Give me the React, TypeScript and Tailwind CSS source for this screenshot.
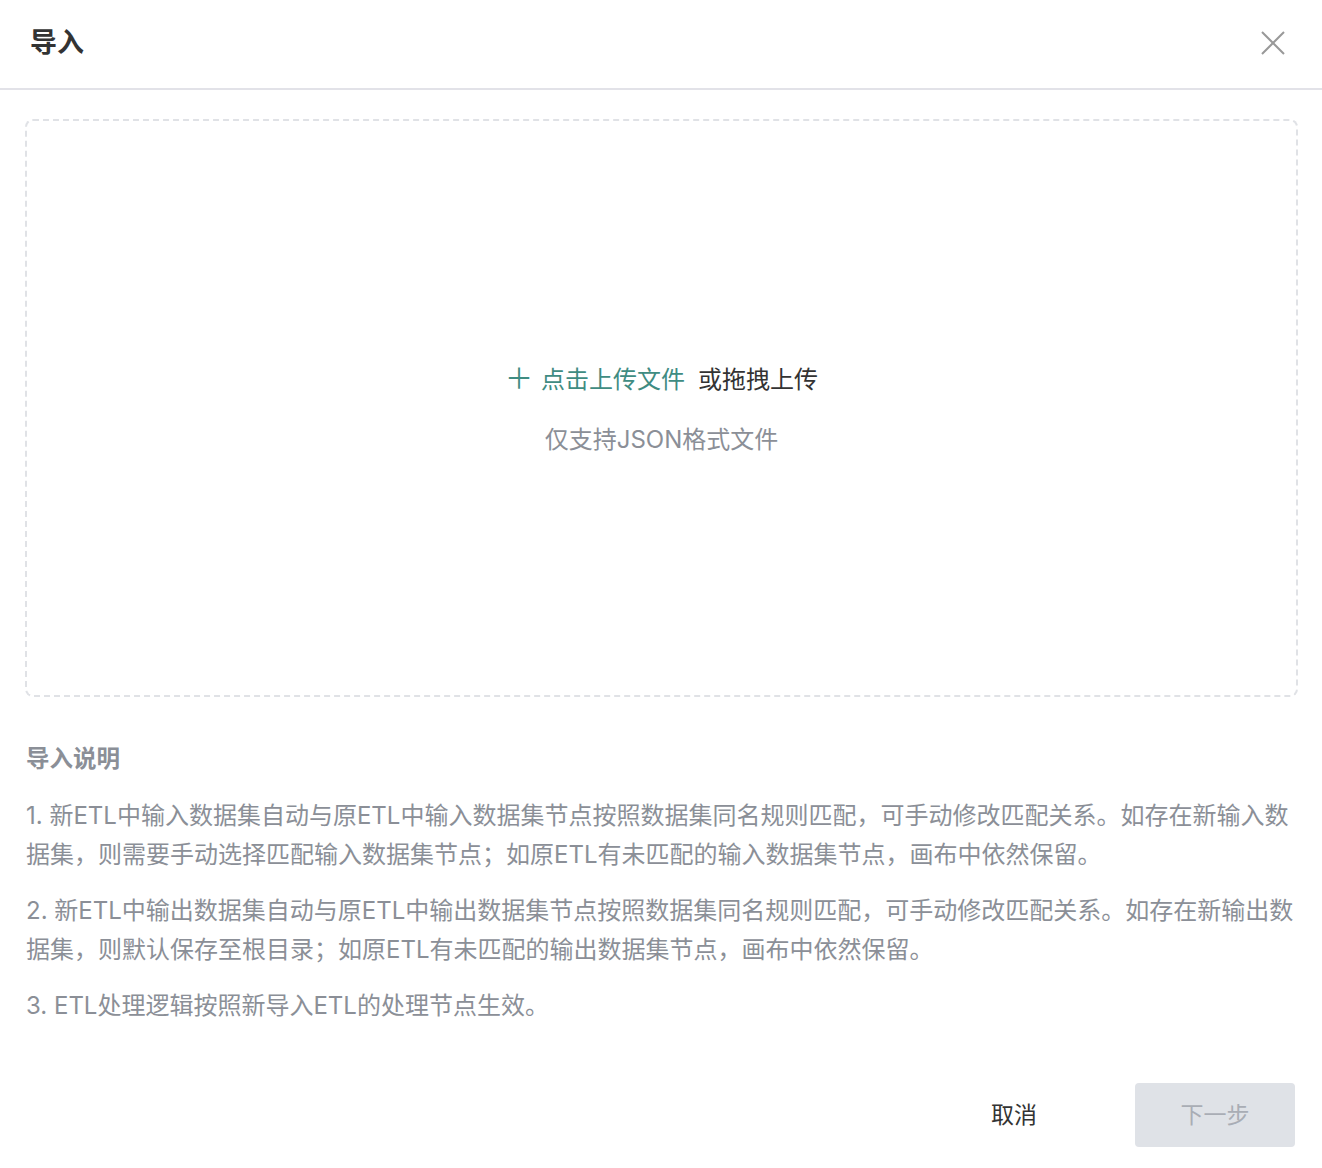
import React from "react";

const notes = [
    "1. 新ETL中输入数据集自动与原ETL中输入数据集节点按照数据集同名规则匹配，可手动修改匹配关系。如存在新输入数据集，则需要手动选择匹配输入数据集节点；如原ETL有未匹配的输入数据集节点，画布中依然保留。",
    "2. 新ETL中输出数据集自动与原ETL中输出数据集节点按照数据集同名规则匹配，可手动修改匹配关系。如存在新输出数据集，则默认保存至根目录；如原ETL有未匹配的输出数据集节点，画布中依然保留。",
    "3. ETL处理逻辑按照新导入ETL的处理节点生效。",
];

export default function App() {
    return (
        <div
            className="w-[1322px] h-[1168px] bg-white flex flex-col"
            style={{ fontFamily: 'Inter, "Noto Sans CJK SC", sans-serif' }}
        >
            {/* header */}
            <div className="h-[90px] shrink-0 flex items-center justify-between pl-[30px] pr-[37px] pb-[3px] border-b-2 border-[#e2e2e8]">
                <h1 className="text-[27px] font-bold text-[#333] leading-none">导入</h1>
                <button type="button" className="w-[24px] h-[24px] flex items-center justify-center">
                    <svg width="24" height="24" viewBox="0 0 24 24" fill="none">
                        <path d="M1 1L23 23M23 1L1 23" stroke="#999" strokeWidth="2" />
                    </svg>
                </button>
            </div>

            {/* body */}
            <div className="px-[25px] pt-[29px]">
                <div className="h-[578px] w-[1273px] rounded-[8px] border-2 border-dashed border-[#e0e2e6] flex flex-col items-center justify-center pt-[4px]">
                    <div className="flex items-center text-[24px] leading-[36px]">
                        <span className="text-[#3f8c82] text-[28px] leading-none mr-[8px] mt-[-2px]">＋</span>
                        <span className="text-[#3f8c82]">点击上传文件</span>
                        <span className="text-[#333] ml-[13px]">或拖拽上传</span>
                    </div>
                    <div className="mt-[24px] text-[24px] leading-[36px] text-[#8b8f97]">仅支持JSON格式文件</div>
                </div>

                <div className="mt-[44px] text-[23.5px] leading-[36px] font-bold text-[#8b8f97] pl-[1px]">导入说明</div>
                <div className="mt-[19px] flex flex-col gap-[17px] text-[24px] leading-[39px] text-[#8b8f97] pl-[1px]">
                    {notes.map((n) => (
                        <p key={n}>{n}</p>
                    ))}
                </div>
            </div>

            {/* footer */}
            <div className="mt-auto mb-[21px] flex justify-end pr-[27px] gap-[41px]">
                <button type="button" className="w-[160px] h-[64px] text-[23px] text-[#333]">取消</button>
                <button type="button" className="w-[160px] h-[64px] rounded-[4px] bg-[#dfe2e7] text-[23px] text-[#a9adb5]">下一步</button>
            </div>
        </div>
    );
}
